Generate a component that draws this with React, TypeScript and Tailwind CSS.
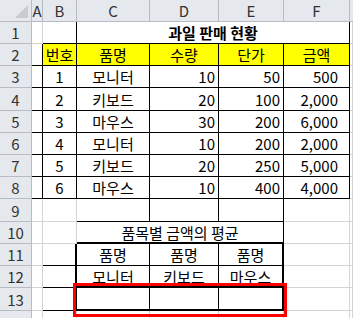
import React from "react";

const colWidths = [32, 11, 34, 73, 69, 65, 66];
const rowHeights = [22, 22, 22, 22, 23, 22, 22, 22, 22, 23, 22, 22, 22, 23, 22];
const letters = ["A", "B", "C", "D", "E", "F", ""];

type Cell = {
  text?: string;
  align?: "left" | "center" | "right";
  bold?: boolean;
  fill?: boolean;
  span?: number;
  pad?: string;
  r?: string; // right border classes
  b?: string; // bottom border classes
};

const grid = "border-[#d4d4d4]";

const tableRows = [
  ["1", "모니터", "10", "50", "500"],
  ["2", "키보드", "20", "100", "2,000"],
  ["3", "마우스", "30", "200", "6,000"],
  ["4", "모니터", "10", "200", "2,000"],
  ["5", "키보드", "20", "250", "5,000"],
  ["6", "마우스", "10", "400", "4,000"],
];

// columns A..G -> 7 cells per row (merged cells count by span)
function buildRow(r: number): Cell[] {
  const cells: Cell[] = Array.from({ length: 7 }, () => ({}));
  if (r === 1) {
    return [
      {},
      { b: "border-black" },
      { text: "과일 판매 현황", bold: true, span: 4, b: "border-black" },
      {},
    ];
  }
  if (r >= 2 && r <= 8) {
    cells[0] = { r: "border-black" };
    for (let c = 1; c <= 5; c++) cells[c] = { r: "border-black", b: "border-black" };
    if (r === 2) {
      ["번호", "품명", "수량", "단가", "금액"].forEach((t, i) => {
        cells[i + 1] = { ...cells[i + 1], text: t, fill: true, align: "center" };
      });
    } else {
      tableRows[r - 3].forEach((t, i) => {
        cells[i + 1] = {
          ...cells[i + 1],
          text: t,
          align: i < 2 ? "center" : "right",
          pad: i === 4 ? "pr-[11px]" : undefined,
        };
      });
    }
    return cells;
  }
  if (r === 9) {
    for (let c = 2; c <= 4; c++) cells[c] = { b: "border-black" };
    return cells;
  }
  if (r === 10) {
    return [{}, {}, { text: "품목별 금액의 평균", span: 3, b: "border-black border-b-2" }, {}, {}];
  }
  if (r >= 11 && r <= 13) {
    cells[1] = { r: "border-black border-r-2" };
    const thickBottom = r >= 12;
    for (let c = 2; c <= 4; c++) {
      cells[c] = {
        r: c === 4 ? "border-black border-r-2" : "border-black",
        b: thickBottom ? "border-black border-b-2" : "border-black",
        align: "center",
        text: r === 11 ? "품명" : r === 12 ? ["모니터", "키보드", "마우스"][c - 2] : undefined,
      };
    }
    return cells;
  }
  return cells;
}

function Header({ children, last }: { children?: React.ReactNode; last?: boolean }) {
  return (
    <div
      className={`flex items-center justify-center bg-[#e5e8ec] border-b border-[#b7bcc4] text-[#333] ${
        last ? "" : "border-r"
      }`}
    >
      {children}
    </div>
  );
}

export default function App() {
  const template = `${colWidths.map((w) => `${w}px`).join(" ")} 1fr`;
  const rows = rowHeights.map((h) => `${h}px`).join(" ");
  const items: React.ReactNode[] = [];

  // corner
  items.push(
    <div key="corner" className="relative bg-[#e5e8ec] border-r border-b border-[#b7bcc4]">
      <svg className="absolute right-[3px] bottom-[3px]" width="13" height="13" viewBox="0 0 13 13">
        <polygon points="13,0 13,13 0,13" fill="#c8cbd0" />
      </svg>
    </div>
  );
  letters.forEach((l, i) =>
    items.push(
      <Header key={`h${i}`} last={i === letters.length - 1}>
        {l}
      </Header>
    )
  );

  for (let r = 1; r <= 14; r++) {
    items.push(
      <Header key={`rh${r}`}>
        <span className={r === 14 ? "pt-[10px]" : ""}>{r}</span>
      </Header>
    );
    const cells = r === 14 ? (Array.from({ length: 7 }, () => ({})) as Cell[]) : buildRow(r);
    cells.forEach((c, i) => {
      const align =
        c.align === "right"
          ? `justify-end ${c.pad ?? "pr-[3px]"}`
          : c.align === "left"
          ? "justify-start pl-[3px]"
          : "justify-center";
      items.push(
        <div
          key={`c${r}-${i}`}
          className={`flex items-center whitespace-nowrap border-r border-b ${grid} ${c.r ?? ""} ${c.b ?? ""} ${align} ${
            c.fill ? "bg-[#ffff00]" : "bg-white"
          } ${c.bold ? "font-bold" : ""}`}
          style={c.span ? { gridColumn: `span ${c.span}` } : undefined}
        >
          {c.text && <span>{c.text}</span>}
        </div>
      );
    });
  }

  return (
    <div
      className="relative w-[353px] h-[318px] overflow-hidden bg-white text-[15px] leading-none text-black"
      style={{ fontFamily: '"Noto Sans CJK KR", "Noto Sans", sans-serif' }}
    >
      <div className="grid" style={{ gridTemplateColumns: template, gridTemplateRows: rows }}>
        {items}
      </div>
      <div className="absolute left-[73px] top-[283px] w-[214px] h-[34px] border-[3px] border-[#ff0000] pointer-events-none" />
    </div>
  );
}
